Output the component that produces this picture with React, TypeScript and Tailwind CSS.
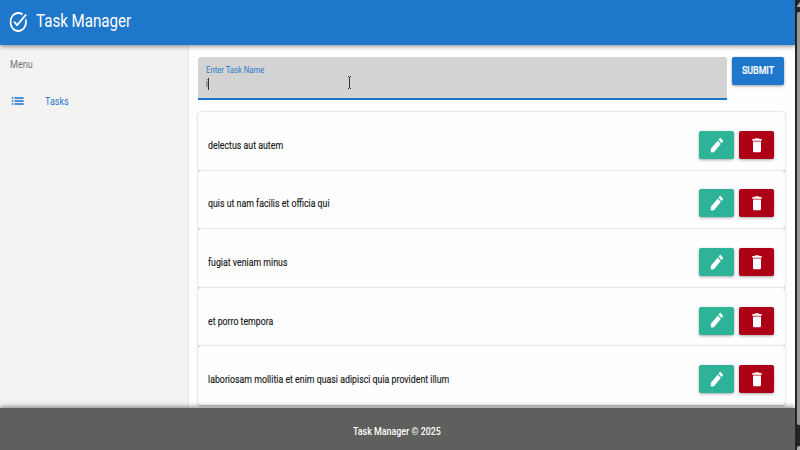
import { useLayoutEffect, useRef, useState } from "react";

type FitProps = { text: string; width: number; className?: string };

// Condenses a single line of text horizontally to the given width.
function Fit({ text, width, className = "" }: FitProps) {
  const ref = useRef<HTMLSpanElement>(null);
  const [scale, setScale] = useState(0.85);
  useLayoutEffect(() => {
    if (ref.current) setScale(width / ref.current.offsetWidth);
  }, [text, width]);
  return (
    <span className={`block whitespace-nowrap ${className}`} style={{ width }}>
      <span ref={ref} className="inline-block origin-left" style={{ transform: `scaleX(${scale})` }}>
        {text}
      </span>
    </span>
  );
}

function Icon({ d, className, box = "0 0 24 24" }: { d: string; className: string; box?: string }) {
  return (
    <svg viewBox={box} preserveAspectRatio="none" fill="currentColor" stroke="currentColor" strokeWidth="0" className={className}>
      <path d={d} />
    </svg>
  );
}

const TASK_ALT =
  "M22 5.18 10.59 16.6l-4.24-4.24 1.41-1.41 2.83 2.83 10-10L22 5.18zM19.79 10.22c.13.57.21 1.17.21 1.78 0 4.42-3.58 8-8 8s-8-3.58-8-8 3.58-8 8-8c1.58 0 3.04.46 4.28 1.25l1.44-1.44C16.1 2.67 14.13 2 12 2 6.48 2 2 6.48 2 12s4.48 10 10 10 10-4.48 10-10c0-1.19-.22-2.33-.6-3.39l-1.61 1.61z";
const LIST = "M3 13h2v-2H3v2zm0 4h2v-2H3v2zm0-8h2V7H3v2zm4 4h14v-2H7v2zm0 4h14v-2H7v2zM7 7v2h14V7H7z";
const EDIT = "M3 16.6V21h4.4L18 10.4 13.6 6 3 16.6zM21.2 7.3a1 1 0 0 0 0-1.5l-3-3a1 1 0 0 0-1.5 0L14.9 4.6l4.5 4.5 1.8-1.8z";
const TRASH = "M6 19c0 1.1.9 2 2 2h8c1.1 0 2-.9 2-2V7H6v12zM19 4h-3.5l-1-1h-5l-1 1H5v2h14V4z";

const tasks = [
  { title: "delectus aut autem", width: 75 },
  { title: "quis ut nam facilis et officia qui", width: 121.5 },
  { title: "fugiat veniam minus", width: 79.5 },
  { title: "et porro tempora", width: 65.5 },
  { title: "laboriosam mollitia et enim quasi adipisci quia provident illum", width: 241 },
];

const action =
  "flex h-7 w-[35px] items-center justify-center rounded-[2px] text-white shadow-[0_1px_3px_rgba(0,0,0,0.35)]";

function TaskRow({ title, width }: { title: string; width: number }) {
  return (
    <li className="flex h-[58.6px] items-center rounded-[3px] bg-[#fefefe] pt-[7px] pr-[10.5px] pl-[10px] shadow-[0_0.5px_2px_rgba(0,0,0,0.3)]">
      <Fit text={title} width={width} className="pt-[0.2px] text-[11.5px] leading-4 text-[#161616] [-webkit-text-stroke:0.15px]" />
      <div className="ml-auto flex gap-[5px]">
        <button className={`${action} bg-[#2eb398]`}>
          <Icon d={EDIT} className="h-[18.5px] w-[15.5px] stroke-[0.3px]" />
        </button>
        <button className={`${action} bg-[#ad0017]`}>
          <Icon d={TRASH} className="h-[18.5px] w-4" />
        </button>
      </div>
    </li>
  );
}

export default function App() {
  return (
    <div className="flex h-[450px] w-[800px] overflow-hidden bg-[#fefefe] font-['Roboto',sans-serif]">
      <div className="flex w-[795px] flex-col">
        <header className="z-10 flex h-[44.5px] shrink-0 items-center bg-[#1f77cb] pl-[7.5px] text-white shadow-[0_1px_5px_rgba(0,0,0,0.5)]">
          <Icon d={TASK_ALT} className="-mt-px h-[24px] w-[20.5px]" />
          <Fit text="Task Manager" width={95.5} className="ml-[8px] -mt-[2px] text-[18.5px] leading-6" />
        </header>

        <div className="flex h-[363px] shrink-0">
          <aside className="w-[189px] shrink-0 border-r border-[#e6e6e6] bg-[#f3f3f3] pt-[11px] pl-[10px]">
            <Fit text="Menu" width={22.8} className="text-[11.5px] leading-4 text-[#747474]" />
            <nav className="mt-5 flex items-center text-[#1f77cb]">
              <Icon d={LIST} className="h-[18px] w-[15.5px] stroke-[0.2px]" />
              <Fit text="Tasks" width={23.5} className="ml-[19.5px] text-[11.5px] leading-4" />
            </nav>
          </aside>

          <main className="flex-1 pt-[12.5px] pr-[10.5px] pl-[9.4px]">
            <form className="flex items-start gap-[5px]">
              <div className="relative h-[43px] w-[528.6px] rounded-t-[3px] border-b-2 border-[#1f77cb] bg-[#d3d3d3] pt-[7px] pl-[7.5px]">
                <Fit text="Enter Task Name" width={58.5} className="text-[9.5px] leading-3 text-[#277bc9]" />
                <div className="mt-[2px] flex items-center">
                  <Fit text="i" width={2} className="text-[11px] leading-3 text-[#333]" />
                  <span className="h-3 w-px bg-[#333]" />
                </div>
                <svg viewBox="0 0 5 13" className="absolute top-[18.5px] left-[148.5px] h-[13px] w-[5px]" fill="none" stroke="#333">
                  <path d="M1 .5h1M3 .5h1M2.5 1v11M1 12.5h1M3 12.5h1" />
                </svg>
              </div>
              <button
                type="button"
                className="flex h-7 w-[52px] items-center justify-center rounded-[2px] bg-[#1f77cb] text-white shadow-[0_1px_3px_rgba(0,0,0,0.4)]"
              >
                <Fit text="SUBMIT" width={32} className="text-left text-[11px] leading-4 font-medium [-webkit-text-stroke:0.2px]" />
              </button>
            </form>
            <ul className="mt-[12px]">
              {tasks.map((t) => (
                <TaskRow key={t.title} title={t.title} width={t.width} />
              ))}
            </ul>
          </main>
        </div>

        <footer className="z-10 flex flex-1 items-center justify-center bg-[#5f5f5d] pt-[6px] pr-px text-white shadow-[0_-1px_5px_rgba(0,0,0,0.5)]">
          <Fit text="Task Manager © 2025" width={88} className="text-[11px] leading-4 font-medium" />
        </footer>
      </div>

      <div className="z-20 flex w-[5px] flex-col bg-[#242424] pl-[2px]">
        <div className="flex h-3 items-start justify-center bg-[#24272c] pt-[2px]">
          <svg viewBox="0 0 3 5" className="h-[5px] w-[3px]" fill="#aaa">
            <path d="M3 0v5H0V4z" />
          </svg>
        </div>
        <div className="h-[413px] rounded-l-[2px] bg-[#999]" />
        <div className="mt-[21px] h-1 rounded-tl-[2px] bg-[#aaa]" />
      </div>
    </div>
  );
}
